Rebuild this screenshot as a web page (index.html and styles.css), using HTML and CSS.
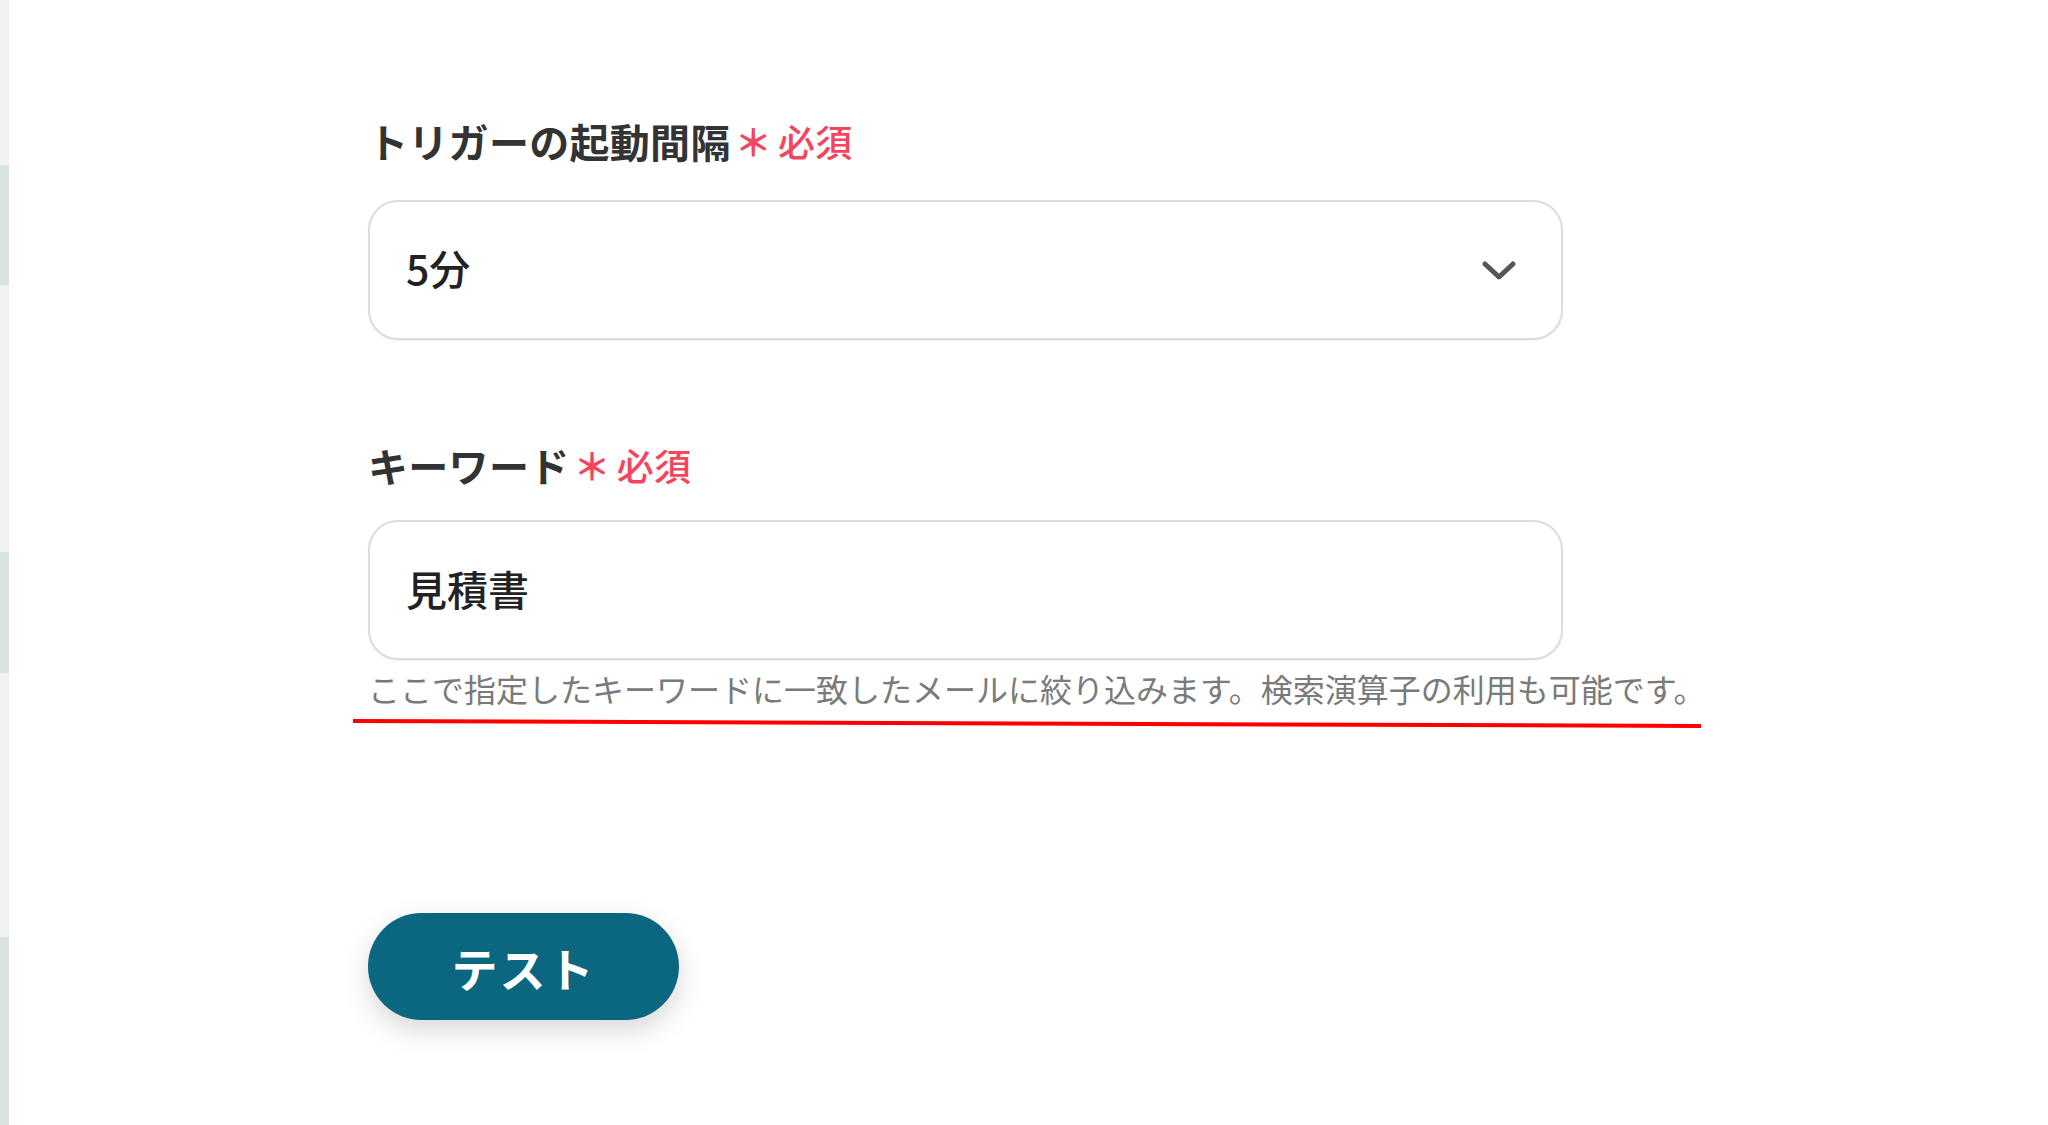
FILE: index.html
```html
<!DOCTYPE html>
<html lang="ja">
<head>
<meta charset="utf-8">
<link rel="stylesheet" href="styles.css">
</head>
<body>
<div class="page">
  <aside class="strip">
    <div class="strip-block b1"></div>
    <div class="strip-block b2"></div>
    <div class="strip-block b3"></div>
  </aside>
  <main class="content">
    <div class="field">
      <label class="label">トリガーの起動間隔<span class="ast">＊</span><span class="req">必須</span></label>
      <div class="box select">
        <span>5分</span>
        <svg class="chev" width="36" height="22" viewBox="0 0 36 22"><polyline points="4,5 18,18 32,5" fill="none" stroke="#555" stroke-width="5" stroke-linecap="round" stroke-linejoin="round"/></svg>
      </div>
    </div>
    <div class="field second">
      <label class="label">キーワード<span class="ast">＊</span><span class="req">必須</span></label>
      <div class="box input"><span>見積書</span></div>
      <div class="help">ここで指定したキーワードに一致したメールに絞り込みます。検索演算子の利用も可能です。
        <svg class="redline" width="1360" height="12" viewBox="0 0 1360 12"><line x1="0" y1="3" x2="1348" y2="8" stroke="#ff0000" stroke-width="4"/></svg>
      </div>
    </div>
    <button class="test">テスト</button>
  </main>
</div>
</body>
</html>
```
FILE: styles.css
```css
html, body {
  margin: 0;
  padding: 0;
  background: #fff;
}
body {
  font-family: "Noto Sans CJK JP", "Noto Sans", sans-serif;
  color: #333;
}
.page {
  display: flex;
  width: 2048px;
  height: 1125px;
  overflow: hidden;
}
.strip {
  width: 9px;
  flex: none;
  background: #f1f1f1;
  display: flex;
  flex-direction: column;
}
.strip-block {
  background: #d9e3e1;
  flex: none;
}
.b1 { margin-top: 165px; height: 120px; }
.b2 { margin-top: 267px; height: 121px; }
.b3 { margin-top: 264px; flex: 1; }

.content {
  padding: 111px 0 0 359px;
  display: flex;
  flex-direction: column;
  align-items: flex-start;
}
.field {
  width: 1195px;
  display: flex;
  flex-direction: column;
}
.field.second {
  margin-top: 95px;
}
.label {
  font-size: 40px;
  line-height: 60px;
  height: 60px;
  font-weight: 700;
  color: #333;
  display: flex;
  align-items: center;
  white-space: nowrap;
  letter-spacing: 0.3px;
}
.ast {
  color: #f5455c;
  font-size: 37px;
  font-weight: 700;
  margin-left: 4px;
  margin-right: 6px;
}
.req {
  color: #f5455c;
  font-size: 37px;
  font-weight: 500;
}
.box {
  margin-top: 29px;
  height: 140px;
  box-sizing: border-box;
  border: 2px solid #dcdcdc;
  border-radius: 30px;
  box-shadow: 0 1px 2px rgba(0, 0, 0, 0.06);
  display: flex;
  align-items: center;
  padding: 0 44px 6px 36px;
  font-size: 41px;
  font-weight: 500;
  color: #222;
  background: #fff;
}
.input {
  margin-top: 25px;
  padding-bottom: 4px;
}
.select {
  justify-content: space-between;
}
.chev {
  display: block;
  margin-top: 6px;
}
.help {
  position: relative;
  margin-top: 4px;
  font-size: 32px;
  line-height: 48px;
  color: #7a7a7a;
  white-space: nowrap;
}
.redline {
  position: absolute;
  left: -15px;
  top: 54px;
}
.test {
  margin-top: 201px;
  width: 311px;
  height: 107px;
  border: none;
  border-radius: 54px;
  background: #0b6680;
  color: #fff;
  font-family: "Noto Sans CJK JP", "Noto Sans", sans-serif;
  font-size: 46px;
  font-weight: 700;
  letter-spacing: 2px;
  box-shadow: 0 10px 28px rgba(0, 0, 0, 0.16);
  padding: 0;
}
```
